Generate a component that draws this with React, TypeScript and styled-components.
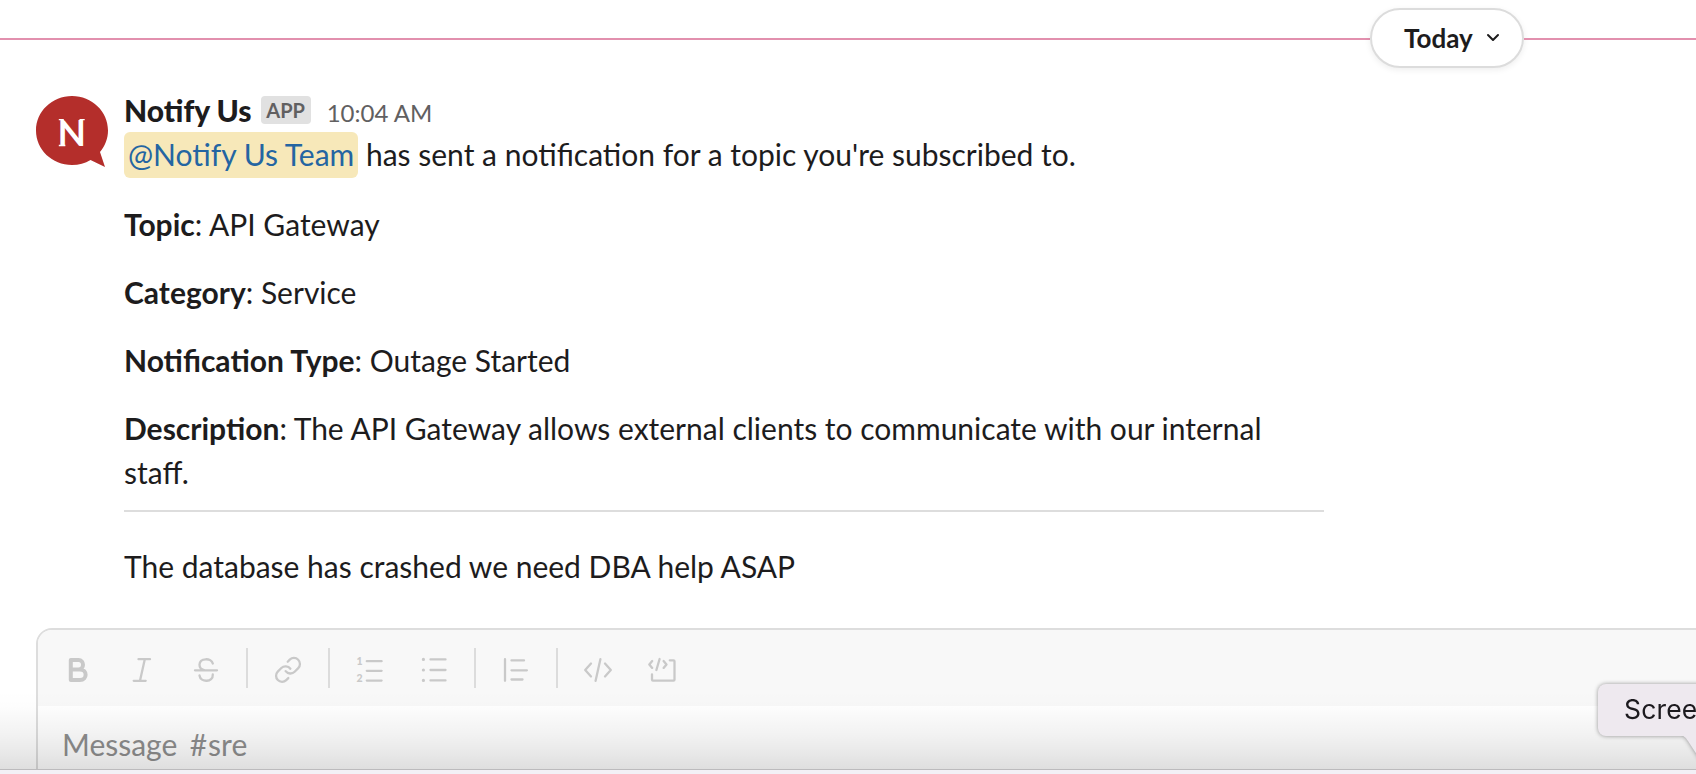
import React from "react";
import styled, { createGlobalStyle } from "styled-components";

const GlobalStyle = createGlobalStyle`
  * { box-sizing: border-box; }
  html, body { margin: 0; background: #fff; overflow: hidden; }
  body { font-family: Lato, "Liberation Sans", sans-serif; color: #1d1c1d; }
`;

const Screen = styled.main`
  position: relative;
  width: 1696px;
  height: 774px;
  overflow: hidden;
  display: flex;
  flex-direction: column;
  background: #fff;
`;

const DayDivider = styled.div`
  display: flex;
  flex: none;
  align-items: center;
  height: 60px;
  margin-top: 8px;
`;

const DividerLine = styled.div<{ $width?: number }>`
  height: 2px;
  margin-top: 2px;
  background: #e290ae;
  flex: ${(p) => (p.$width ? `0 0 ${p.$width}px` : "1")};
`;

const DayButton = styled.button`
  display: flex;
  align-items: center;
  gap: 13px;
  width: 154px;
  height: 60px;
  padding: 0 0 0 32px;
  border: 2px solid #dcdcdc;
  border-radius: 30px;
  background: #fff;
  color: #1d1c1d;
  font: 700 26px Lato, sans-serif;
  box-shadow: 0 2px 6px rgba(0, 0, 0, 0.07);
  svg { margin-top: -1px; }
`;

const Message = styled.article`
  display: flex;
  flex: none;
  gap: 16px;
  height: 560px;
  padding: 20px 36px 0;
`;

const Avatar = styled.svg`
  width: 72px;
  height: 72px;
  margin-top: 8px;
  flex: none;
`;

const Content = styled.div`
  width: 1200px;
  font-size: 30px;
  line-height: 44px;
`;

const Header = styled.header`
  display: flex;
  align-items: baseline;
  height: 44px;
`;

const Sender = styled.span`
  font-weight: 900;
`;

const AppBadge = styled.span`
  align-self: flex-start;
  width: 50px;
  height: 28px;
  margin: 8px 0 0 9px;
  border-radius: 4px;
  background: #e1e1e1;
  color: #616061;
  font-size: 20px;
  font-weight: 700;
  line-height: 28px;
  text-align: center;
`;

const Time = styled.time`
  margin-left: 16px;
  color: #616061;
  font-size: 24px;
`;

const Paragraph = styled.p<{ $gap?: number }>`
  margin: ${(p) => p.$gap ?? 24}px 0 0;
`;

const Mention = styled.span`
  padding: 4px 4px 6px;
  border-radius: 6px;
  background: #f7e8b9;
  color: #2465a2;
`;

const Rule = styled.hr`
  height: 2px;
  margin: 16px 0 0;
  border: 0;
  background: #dddddd;
`;

const Composer = styled.section`
  height: 160px;
  width: 1700px;
  flex: none;
  margin-left: 36px;
  border: 2px solid #dddddd;
  border-radius: 16px 16px 0 0;
  overflow: hidden;
`;

const Toolbar = styled.div`
  display: flex;
  align-items: center;
  height: 76px;
  padding-left: 8px;
  background: #f8f8f8;
  color: #c9c9c9;
`;

const Tool = styled.span`
  display: flex;
  align-items: center;
  justify-content: center;
  width: 64px;
  margin-top: 4px;
`;

const Separator = styled.i`
  width: 2px;
  height: 40px;
  margin: 0 8px;
  background: #dcdcdc;
`;

const Placeholder = styled.div`
  padding: 16px 24px;
  color: #8e8e8e;
  font-size: 30px;
  line-height: 44px;
`;

const Hash = styled.span`
  margin: 0 1px 0 4.7px;
`;

const BottomShade = styled.div`
  position: absolute;
  left: 0;
  right: 0;
  bottom: 0;
  height: 84px;
  border-bottom: 4px solid #f3f0f6;
  background: linear-gradient(
    rgba(0, 0, 0, 0),
    rgba(0, 0, 0, 0.008) 20%,
    rgba(0, 0, 0, 0.055) 58%,
    rgba(0, 0, 0, 0.09) 79%,
    rgba(0, 0, 0, 0.13)
  );
  background-clip: padding-box;
  &::after {
    content: "";
    position: absolute;
    inset: auto 0 0;
    height: 1px;
    background: #bcbbbd;
  }
`;

const Tooltip = styled.div`
  position: absolute;
  left: 1598px;
  top: 684px;
  width: 120px;
  height: 52px;
  padding-left: 26px;
  border-radius: 8px;
  background: #eee9ef;
  color: #1c1a1e;
  font: 26.5px/51px Inter, sans-serif;
  letter-spacing: 0.15px;
  white-space: nowrap;
  filter: drop-shadow(0 0 2px rgba(0, 0, 0, 0.4));
`;

const TooltipTail = styled.svg`
  position: absolute;
  left: 80px;
  top: 51px;
`;

const Glyph = ({ children }: { children: React.ReactNode }) => (
  <svg width="32" height="32" viewBox="0 0 32 32" fill="none" stroke="currentColor" strokeWidth="2.3" strokeLinecap="round" strokeLinejoin="round">
    {children}
  </svg>
);

const fields = [
  ["Topic", "API Gateway"],
  ["Category", "Service"],
  ["Notification Type", "Outage Started"],
  ["Description", "The API Gateway allows external clients to communicate with our internal staff."],
];

export default function App() {
  return (
    <Screen>
      <GlobalStyle />
      <DayDivider>
        <DividerLine $width={1370} />
        <DayButton>
          Today
          <svg width="14" height="10" viewBox="0 0 14 10" fill="none" stroke="currentColor" strokeWidth="2" strokeLinecap="round" strokeLinejoin="round">
            <path d="M2 2l5 5 5-5" />
          </svg>
        </DayButton>
        <DividerLine />
      </DayDivider>
      <Message>
        <Avatar viewBox="0 0 72 72">
          <path d="M36 0C16 0 0 15.500 0 34.500S16 69 36 69c7 0 13-1.800 18.500-5L69 71l-5-15c5-6 8-13.500 8-21.500C72 15.500 56 0 36 0z" fill="#b42e2b" />
          <text x="35.800" y="50" textAnchor="middle" fill="#fff" fontFamily="Lato" fontWeight="700" fontSize="37">N</text>
          <path d="M22.800 23.700h5M43.500 23.700h5.200M22.800 49.500h6.500" stroke="#fff" strokeWidth="1.300" />
        </Avatar>
        <Content>
          <Header>
            <Sender>Notify Us</Sender>
            <AppBadge>APP</AppBadge>
            <Time>10:04 AM</Time>
          </Header>
          <Paragraph $gap={0}>
            <Mention>@Notify Us Team</Mention> has sent a notification for a topic you're subscribed to.
          </Paragraph>
          {fields.map(([label, value], i) => (
            <Paragraph key={label} $gap={i === 0 ? 26 : 24}>
              <b>{label}</b>: {value}
            </Paragraph>
          ))}
          <Rule />
          <Paragraph $gap={32}>The database has crashed we need DBA help ASAP</Paragraph>
        </Content>
      </Message>
      <Composer>
        <Toolbar>
          <Tool><Glyph><path d="M8.800 6.100h7.700c6 0 6 9.400 0 9.400h1.500c7.500 0 7.500 10.400 0 10.400H8.800zM9 15.500h9" strokeWidth="4" /></Glyph></Tool>
          <Tool><Glyph><path d="M12.500 5.200h11.500M7.700 26.800h12M18.800 5.200l-4.800 21.600" /></Glyph></Tool>
          <Tool><Glyph><path d="M5 16.300h22M22.800 9.500C21.500 3.800 9.800 3.600 9.500 10.500c-.1 3 2 5.300 5.500 5.800M9.500 21.500c1 7.300 13.800 7 13.300-1" /></Glyph></Tool>
          <Separator />
          <Tool>
            <Glyph>
              <g transform="translate(1.600 1.500) scale(1.200)" strokeWidth="1.900">
                <path d="M10 13a5 5 0 0 0 7.540.540l3-3a5 5 0 0 0-7.070-7.070l-1.720 1.710" />
                <path d="M14 11a5 5 0 0 0-7.540-.540l-3 3a5 5 0 0 0 7.070 7.070l1.710-1.710" />
              </g>
            </Glyph>
          </Tool>
          <Separator />
          <Tool>
            <Glyph>
              <path d="M12.800 7.200h14.800M12.800 16.800h14.800M12.800 26.600h14.800" />
              <g fill="currentColor" stroke="none" fontFamily="Lato" fontWeight="900" fontSize="10.500">
                <text x="2.600" y="11.300">1</text>
                <text x="2.600" y="27.700">2</text>
              </g>
            </Glyph>
          </Tool>
          <Tool><Glyph><path d="M12.500 5.400h15M12.500 16h15M12.500 26.400h15" /><path d="M5.400 5.400h.01M5.400 16h.01M5.400 26.400h.01" strokeWidth="3.200" /></Glyph></Tool>
          <Separator />
          <Tool><Glyph><path d="M5 5.200v21.600M11.500 6.400h12.500M11.500 16.300h15.400M11.500 25.500h11" /></Glyph></Tool>
          <Separator />
          <Tool><Glyph><path d="M9 9.500L3.200 16 9 22.500M18.400 5.200l-4.800 21.600M23 9.500l5.800 6.500-5.800 6.500" /></Glyph></Tool>
          <Tool><Glyph><path d="M6.200 7L3.300 10.400l2.900 3.500M13.600 5l-3.200 11M17.600 7l2.900 3.400-2.900 3.500M23.800 6.300h3.700a1 1 0 0 1 1 1v18.400a1 1 0 0 1-1 1H7a1 1 0 0 1-1-1V20.500" /></Glyph></Tool>
        </Toolbar>
        <Placeholder>Message <Hash>#</Hash>sre</Placeholder>
      </Composer>
      <BottomShade />
      <Tooltip>
        Screen
        <TooltipTail width="40" height="30" viewBox="0 0 40 30">
          <path d="M0 0C6 0 8 3 10 6L23 26H40V0z" fill="#eee9ef" />
        </TooltipTail>
      </Tooltip>
    </Screen>
  );
}
